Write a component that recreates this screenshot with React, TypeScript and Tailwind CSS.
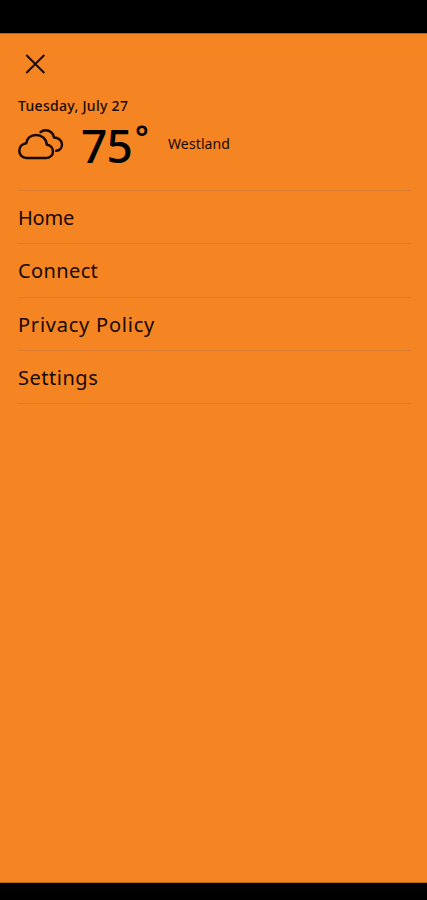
const menuItems = [
  { label: 'Home', className: 'tracking-[-0.2px]' },
  { label: 'Connect', className: 'tracking-[0.38px]' },
  { label: 'Privacy Policy', className: 'tracking-[0.77px]' },
  { label: 'Settings', className: 'tracking-[0.52px]' },
];

function CloseIcon() {
  return (
    <svg className="w-5 h-5" viewBox="0 0 20 20" fill="none" stroke="currentColor" strokeWidth={1.9}>
      <path d="M1.3 1L19.3 19M19.3 1L1.3 19" />
    </svg>
  );
}

function CloudsIcon() {
  return (
    <svg
      className="w-[46px] h-8"
      viewBox="0 0 46 32"
      fill="none"
      stroke="currentColor"
      strokeWidth={2.5}
      strokeLinecap="round"
      strokeLinejoin="round"
    >
      <path d="M8.5 29H28C32 29 35 26 35 22.4C35 18.8 32.3 16.1 28.8 15.7C28.5 9.9 23.8 6 18 6C12.7 6 9 9.4 8.2 14.2C4.2 14.7 1.3 17.7 1.3 21.7C1.3 25.9 4.3 29 8.5 29Z" />
      <path d="M22.5 3.2C24 1.8 25.7 1.3 27.5 1.3C31.8 1.3 35.5 4.3 35.9 8.5C40.4 8.6 44 11.4 44 15.5C44 18.9 41.7 21.5 38.2 21.8" />
    </svg>
  );
}

export default function App() {
  return (
    <div className="flex h-[900px] w-full flex-col bg-black pt-[33px] pb-[17px] font-['Noto_Sans',sans-serif] text-[#160900]">
      <main className="flex-1 border-y border-[#b46119] bg-[#f58423] pt-[20px] pr-[16px] pl-[18px]">
        <button aria-label="Close menu" className="ml-[7px] block">
          <CloseIcon />
        </button>

        <p className="mt-[21px] h-5 text-[14px] leading-[21px] font-medium tracking-[0.3px] whitespace-nowrap">
          Tuesday, July 27
        </p>

        <div className="flex h-[75px] items-start">
          <div className="mt-[14px]">
            <CloudsIcon />
          </div>
          <div className="ml-[17px] flex h-[60px] w-[87px] text-[46px] leading-[60px] font-medium text-black">
            <span className="tracking-[-0.8px]">75</span>
            <span className="ml-[3px] text-[32px] leading-[44px] font-semibold">°</span>
          </div>
          <span className="mt-[19px] text-[14px] leading-5 tracking-[0.12px]">Westland</span>
        </div>

        <nav className="border-t border-[#dc7c32]">
          {menuItems.map((item) => (
            <a
              key={item.label}
              className={`flex h-[53.25px] items-center border-b border-[#dc7c32] pt-[2px] text-[20px] font-[450] ${item.className}`}
            >
              {item.label}
            </a>
          ))}
        </nav>
      </main>
    </div>
  );
}
